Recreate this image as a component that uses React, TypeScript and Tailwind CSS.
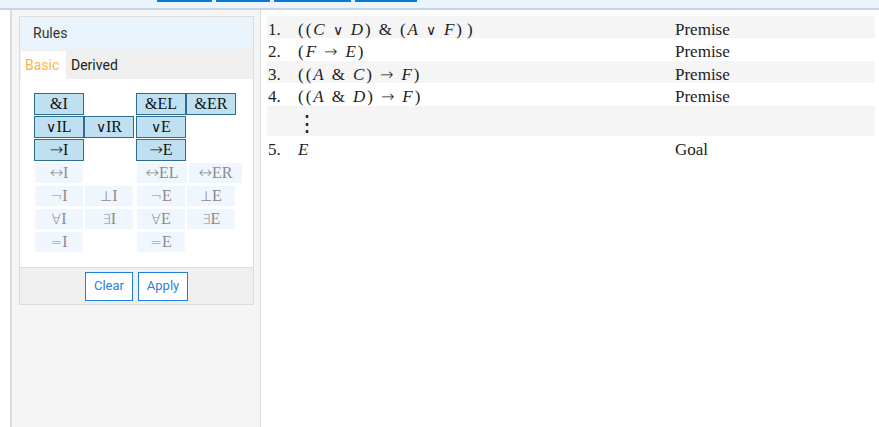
import React from 'react';

type Rule = { sym: string; rest: string; active?: boolean; w?: string } | null;

const leftRules: Rule[][] = [
  [{ sym: '&', rest: 'I', active: true }, null],
  [{ sym: '∨', rest: 'IL', active: true }, { sym: '∨', rest: 'IR', active: true }],
  [{ sym: '→', rest: 'I', active: true }, null],
  [{ sym: '↔', rest: 'I' }, null],
  [{ sym: '¬', rest: 'I' }, { sym: '⊥', rest: 'I' }],
  [{ sym: '∀', rest: 'I' }, { sym: '∃', rest: 'I' }],
  [{ sym: '=', rest: 'I' }, null],
];

const rightRules: Rule[][] = [
  [{ sym: '&', rest: 'EL', active: true }, { sym: '&', rest: 'ER', active: true }],
  [{ sym: '∨', rest: 'E', active: true }, null],
  [{ sym: '→', rest: 'E', active: true }, null],
  [{ sym: '↔', rest: 'EL', w: 'w-[52px]' }, { sym: '↔', rest: 'ER', w: 'w-[55px]' }],
  [{ sym: '¬', rest: 'E' }, { sym: '⊥', rest: 'E' }],
  [{ sym: '∀', rest: 'E' }, { sym: '∃', rest: 'E' }],
  [{ sym: '=', rest: 'E' }, null],
];

const serif = { fontFamily: '"Liberation Serif", "DejaVu Serif", serif' };
const symFont = { fontFamily: '"DejaVu Sans", sans-serif', fontWeight: 200 };

const symSize: Record<string, string> = {
  '∨': 'text-[14px]',
  '→': 'text-[16px]',
  '↔': 'text-[16px]',
};

// symbols that Liberation Serif draws too small or lacks
function Sym({ c }: { c: string }) {
  if (c === '&') return <span>&amp;</span>;
  return (
    <span className={`${symSize[c] ?? 'text-[14px]'} not-italic`} style={symFont}>
      {c}
    </span>
  );
}

function RuleButton({ rule }: { rule: Rule }) {
  if (!rule) return <div className="w-[50px] h-[22px]" />;
  return (
    <div
      className={`${rule.w ?? 'w-[50px]'} h-[22px] flex items-center justify-center text-[16px] leading-none border ${
        rule.active
          ? 'bg-[#bfe0f1] border-[#2d6e8f] text-[#111]'
          : 'bg-[#f0f6fd] border-white text-[#8c8c8c]'
      }`}
      style={serif}
    >
      <Sym c={rule.sym} />
      <span>{rule.rest}</span>
    </div>
  );
}

function RuleGroup({ rows }: { rows: Rule[][] }) {
  return (
    <div className="flex flex-col gap-[1px]">
      {rows.map((row, i) => (
        <div key={i} className="flex">
          {row.map((r, j) => (
            <RuleButton key={j} rule={r} />
          ))}
        </div>
      ))}
    </div>
  );
}

const Op = ({ c }: { c: string }) => (
  <span className="mx-[7px]">
    <Sym c={c} />
  </span>
);
const V = ({ c }: { c: string }) => <i className="mx-[1px]">{c}</i>;
const P = ({ c }: { c: string }) => <span className="mx-[1px]">{c}</span>;

function ProofRow({
  n,
  children,
  just,
  shade,
  h = 'h-[22px]',
}: {
  n?: string;
  children: React.ReactNode;
  just?: string;
  shade?: boolean;
  h?: string;
}) {
  return (
    <div className={`flex items-center pt-[5px] ${h} ${shade ? 'bg-[#f5f5f5]' : 'bg-white'}`}>
      <div className="w-[30px] pl-[1px]">{n}</div>
      <div className="w-[378px] flex items-center">{children}</div>
      <div>{just}</div>
    </div>
  );
}

export default function App() {
  return (
    <div className="w-[879px] h-[427px] bg-white flex flex-col overflow-hidden" style={{ fontFamily: 'Roboto, sans-serif' }}>
      <div className="h-[10px] bg-[#e9f4fe] border-b-2 border-[#c9d6e2] flex items-start pl-[157px] gap-[4px] shrink-0">
        <div className="w-[55px] h-[2px] bg-[#0a78d4]" />
        <div className="w-[54px] h-[2px] bg-[#0a78d4]" />
        <div className="w-[77px] h-[2px] bg-[#0a78d4]" />
        <div className="w-[62px] h-[2px] bg-[#0a78d4]" />
      </div>

      <div className="flex flex-1 min-h-0">
        <div className="w-[251px] ml-[10px] border-l-2 border-r border-[#dcdcdc] bg-[#f5f5f5] pt-[6px] pl-[7px] pr-[6px]">
          <div className="border border-[#dcdcdc] bg-white">
            <div className="h-[32px] bg-[#eaf4fd] flex items-center pl-[13px] text-[14px] text-[#333]">Rules</div>
            <div className="h-[30px] bg-[#efefef] flex items-end pl-[1px] text-[14px]">
              <div className="h-[28px] w-[45px] bg-white flex items-center pl-[4px] text-[#f9b548]">Basic</div>
              <div className="h-[28px] flex items-center pl-[5px] text-[#222]">Derived</div>
            </div>
            <div className="pt-[14px] pb-[14px] pl-[14px] flex gap-[2px]">
              <RuleGroup rows={leftRules} />
              <RuleGroup rows={rightRules} />
            </div>
            <div className="h-[37px] bg-[#efefef] border-t border-[#dcdcdc] flex items-center justify-center gap-[5px]">
              <button className="h-[29px] w-[48px] border border-[#1f80d9] bg-white text-[13px] text-[#2f7fd3]">Clear</button>
              <button className="h-[29px] w-[50px] border border-[#1f80d9] bg-white text-[13px] text-[#2f7fd3]">Apply</button>
            </div>
          </div>
        </div>

        <div className="flex-1 pt-[6px] pl-[6px] pr-[4px] text-[17px] text-[#222]" style={serif}>
          <ProofRow n="1." just="Premise" shade>
            <P c="(" />
            <P c="(" />
            <V c="C" />
            <Op c="∨" />
            <V c="D" />
            <P c=")" />
            <Op c="&" />
            <P c="(" />
            <V c="A" />
            <Op c="∨" />
            <V c="F" />
            <P c=")" />
            <span className="ml-[4px]">)</span>
          </ProofRow>
          <ProofRow n="2." just="Premise" h="h-[23px]">
            <P c="(" />
            <V c="F" />
            <Op c="→" />
            <V c="E" />
            <P c=")" />
          </ProofRow>
          <ProofRow n="3." just="Premise" shade>
            <P c="(" />
            <P c="(" />
            <V c="A" />
            <Op c="&" />
            <V c="C" />
            <P c=")" />
            <Op c="→" />
            <V c="F" />
            <P c=")" />
          </ProofRow>
          <ProofRow n="4." just="Premise" h="h-[23px]">
            <P c="(" />
            <P c="(" />
            <V c="A" />
            <Op c="&" />
            <V c="D" />
            <P c=")" />
            <Op c="→" />
            <V c="F" />
            <P c=")" />
          </ProofRow>
          <div className="h-[30px] bg-[#f5f5f5] flex items-center pt-[5px] pl-[29px]">
            <span className="text-[22px] leading-none" style={{ fontFamily: '"DejaVu Serif", serif' }}>
              ⋮
            </span>
          </div>
          <ProofRow n="5." just="Goal">
            <V c="E" />
          </ProofRow>
        </div>
      </div>
    </div>
  );
}
